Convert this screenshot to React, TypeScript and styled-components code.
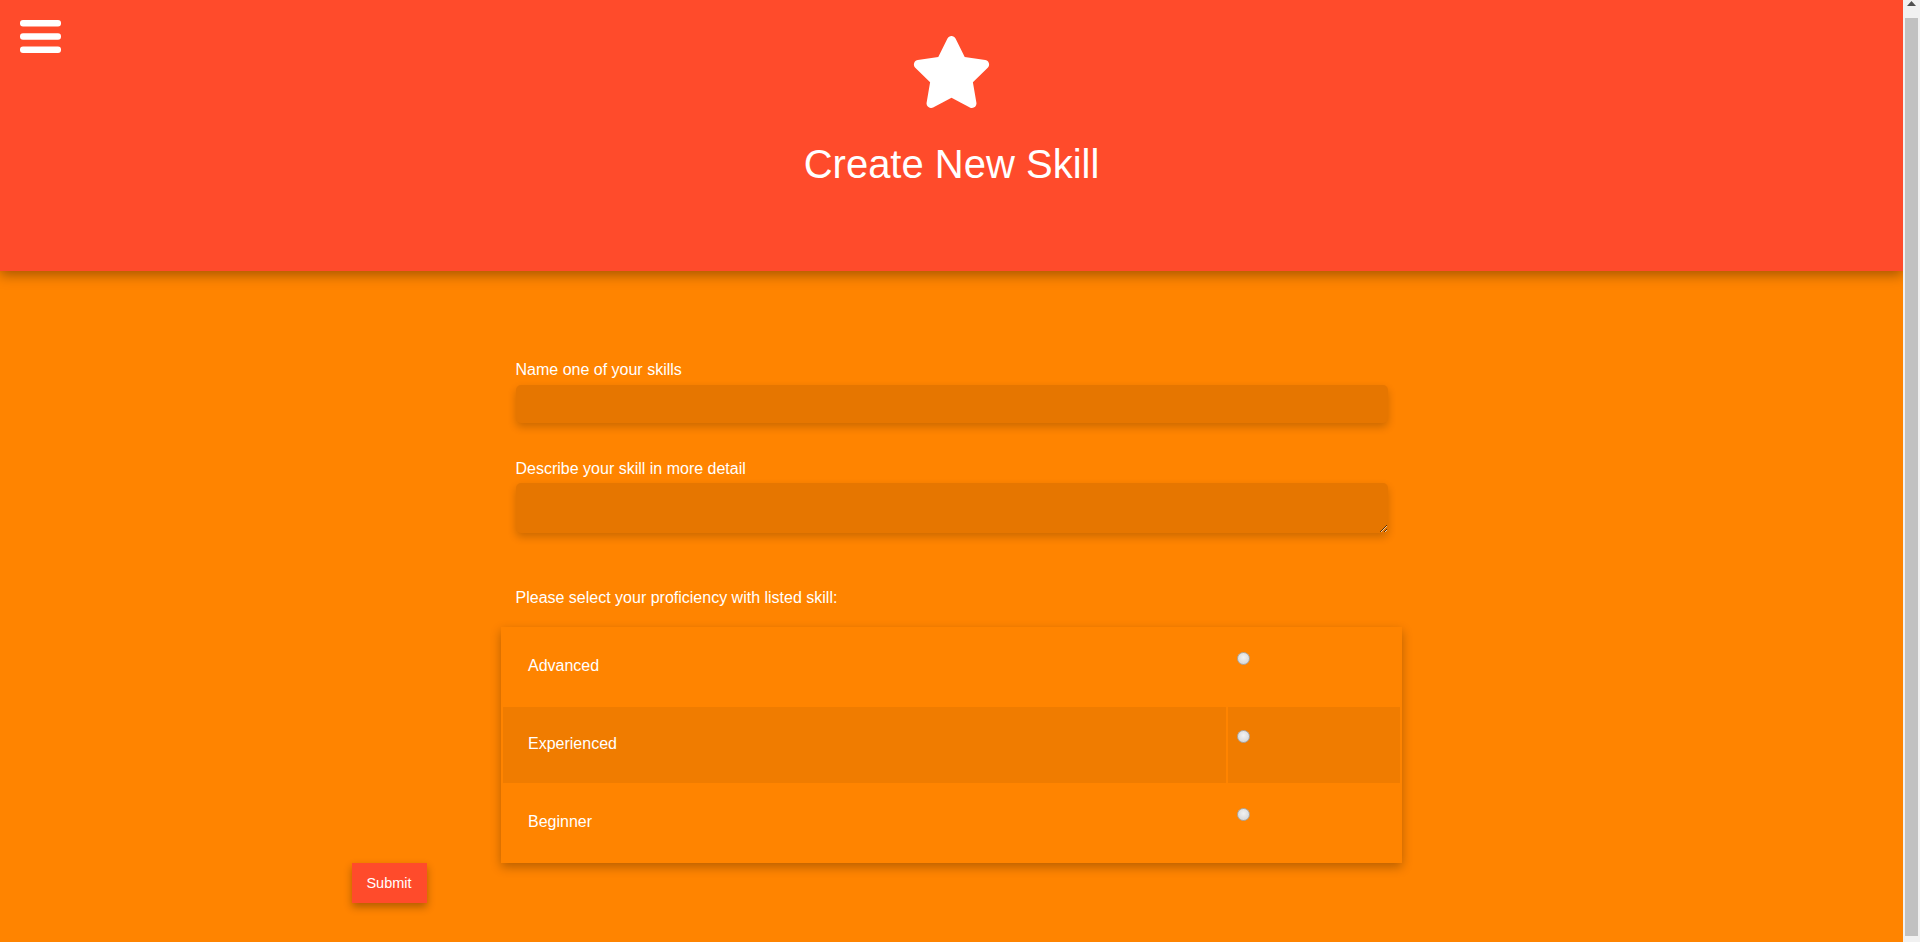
import React from "react";
import styled, { createGlobalStyle } from "styled-components";

const GlobalStyle = createGlobalStyle`
  html, body {
    margin: 0;
    padding: 0;
  }
  body {
    background: #ff8400;
    font-family: "Liberation Sans", Arial, Helvetica, sans-serif;
    color: #ffffff;
    padding-right: 17px;
  }
  * { box-sizing: border-box; }
`;

/* Visual replica of the classic browser scrollbar shown in the reference */
const ScrollTrack = styled.div`
  position: fixed;
  top: 0;
  right: 0;
  z-index: 10;
  width: 17px;
  height: 100vh;
  background: #f1f1f1;
  display: flex;
  flex-direction: column;
  align-items: center;
`;

const ScrollArrow = styled.div`
  flex: 0 0 18px;
  width: 17px;
  display: flex;
  justify-content: center;
  padding-top: 1px;
`;

const ScrollThumb = styled.div`
  flex: 1;
  width: 13px;
  margin-bottom: 6px;
  background: #c1c1c1;
`;

const Header = styled.header`
  position: relative;
  z-index: 2;
  height: 271px;
  background: #ff4b2b;
  box-shadow: 0 4px 12px rgba(0, 0, 0, 0.35);
  display: grid;
  grid-template-columns: 1fr auto 1fr;
  align-items: start;
`;

const MenuButton = styled.button`
  justify-self: start;
  margin: 20px 0 0 20px;
  padding: 0;
  border: none;
  background: transparent;
  cursor: pointer;
  display: block;
  line-height: 0;
`;

const HeaderCenter = styled.div`
  display: flex;
  flex-direction: column;
  align-items: center;
  padding-top: 36px;
`;

const StarIcon = styled.svg`
  display: block;
  width: 81px;
  height: 72px;
`;

const Title = styled.h1`
  margin: 33px 0 0;
  font-size: 40px;
  line-height: 46px;
  font-weight: 400;
  color: #ffffff;
  white-space: nowrap;
`;

const Main = styled.main`
  width: 1200px;
  margin: 0 auto;
  padding: 90px 0 47px;
  display: flex;
  flex-direction: column;
`;

const Fields = styled.div`
  width: 872px;
  align-self: center;
  display: flex;
  flex-direction: column;
`;

const Label = styled.label<{ $gap: number }>`
  display: block;
  font-size: 16px;
  line-height: 18px;
  margin-bottom: ${(p) => p.$gap}px;
  color: #ffffff;
`;

const TextInput = styled.input`
  display: block;
  width: 100%;
  height: 38px;
  margin: 0 0 37px;
  border: none;
  border-radius: 5px;
  background: #e67600;
  box-shadow: 0 4px 8px rgba(0, 0, 0, 0.2);
  color: #ffffff;
  font: inherit;
  padding: 0 10px;
  outline: none;
`;

const TextArea = styled.textarea`
  display: block;
  width: 100%;
  height: 50px;
  margin: 0 0 56px;
  border: none;
  border-radius: 5px;
  background: #e67600;
  box-shadow: 0 4px 8px rgba(0, 0, 0, 0.2);
  color: #ffffff;
  font: inherit;
  padding: 8px 10px;
  outline: none;
`;

const Table = styled.table`
  align-self: center;
  width: 901px;
  border-collapse: separate;
  border-spacing: 2px;
  background: #ff8400;
  box-shadow: 0 4px 10px rgba(0, 0, 0, 0.28);
`;

const Row = styled.tr<{ $highlight?: boolean }>`
  td {
    background: ${(p) => (p.$highlight ? "#f07c00" : "transparent")};
  }
`;

const LevelCell = styled.td`
  width: 723px;
  height: 76px;
  padding: 0 0 2px 25px;
  vertical-align: middle;
  font-size: 16px;
  line-height: 18px;
  color: #ffffff;
`;

const RadioCell = styled.td`
  height: 76px;
  padding: 23px 0 0 9px;
  vertical-align: top;
`;

const Radio = styled.input`
  appearance: none;
  -webkit-appearance: none;
  display: block;
  width: 13px;
  height: 13px;
  margin: 0;
  border-radius: 50%;
  border: 1px solid #a9a9a9;
  background: radial-gradient(circle at 50% 40%, #f2f2f2 0%, #dedede 60%, #cfcfcf 100%);
  cursor: pointer;
`;

const SubmitButton = styled.button`
  align-self: flex-start;
  width: 75px;
  height: 40px;
  border: none;
  background: #ff4b2b;
  color: #ffffff;
  font-family: "Liberation Sans", Arial, sans-serif;
  font-size: 14.5px;
  box-shadow: 0 4px 8px rgba(0, 0, 0, 0.3);
  cursor: pointer;
  padding: 0;
`;

const levels = ["Advanced", "Experienced", "Beginner"];

export default function App() {
  return (
    <>
      <GlobalStyle />
      <Header>
        <MenuButton aria-label="Menu">
          <svg width="41" height="33" viewBox="0 0 41 33">
            <rect x="0" y="0" width="41" height="6.5" rx="3" fill="#fff" />
            <rect x="0" y="13.3" width="41" height="6.5" rx="3" fill="#fff" />
            <rect x="0" y="26.5" width="41" height="6.5" rx="3" fill="#fff" />
          </svg>
        </MenuButton>
        <HeaderCenter>
          <StarIcon viewBox="17 0 542 512">
            <path
              fill="#fff"
              d="M259.3 17.8L194 150.2 47.9 171.5c-26.2 3.8-36.7 36.1-17.7 54.6l105.7 103-25 145.5c-4.5 26.3 23.2 46 46.4 33.7L288 439.6l130.7 68.7c23.2 12.2 50.9-7.4 46.4-33.7l-25-145.5 105.7-103c19-18.5 8.5-50.8-17.7-54.6L382 150.2 316.7 17.8c-11.7-23.6-45.6-23.9-57.4 0z"
            />
          </StarIcon>
          <Title>Create New Skill</Title>
        </HeaderCenter>
        <div />
      </Header>
      <Main>
        <Fields>
          <Label $gap={6} htmlFor="skill-name">Name one of your skills</Label>
          <TextInput id="skill-name" type="text" />
          <Label $gap={5} htmlFor="skill-desc">Describe your skill in more detail</Label>
          <TextArea id="skill-desc" />
          <Label $gap={20}>Please select your proficiency with listed skill:</Label>
        </Fields>
        <Table>
          <tbody>
            {levels.map((lvl, i) => (
              <Row key={lvl} $highlight={i === 1}>
                <LevelCell>{lvl}</LevelCell>
                <RadioCell>
                  <Radio type="radio" name="proficiency" value={lvl} aria-label={lvl} />
                </RadioCell>
              </Row>
            ))}
          </tbody>
        </Table>
        <SubmitButton type="submit">Submit</SubmitButton>
      </Main>
      <ScrollTrack aria-hidden="true">
        <ScrollArrow>
          <svg width="9" height="5" viewBox="0 0 9 5">
            <path d="M0 5 L4.5 0 L9 5 Z" fill="#505050" />
          </svg>
        </ScrollArrow>
        <ScrollThumb />
      </ScrollTrack>
    </>
  );
}
